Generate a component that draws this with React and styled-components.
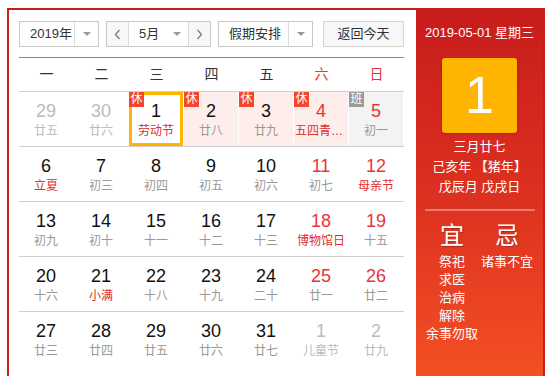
import React from "react";
import styled, { createGlobalStyle } from "styled-components";

const Global = createGlobalStyle`
  html, body { margin: 0; padding: 0; background: #fff; }
  body { font-family: "Liberation Sans", "Noto Sans CJK SC", sans-serif; }
`;

const Frame = styled.div`
  margin: 8px 0 0 7px;
  display: inline-flex;
  border: 2px solid #c81c1c;
  border-left-color: #cc1f1c;
`;

const Main = styled.div`
  width: 407px;
  box-sizing: border-box;
  padding: 11px 12px 10px 10px;
`;

const Toolbar = styled.div`
  display: flex;
  height: 26px;
  padding-bottom: 10px;
  border-bottom: 1px solid #f0604c;
  font-size: 13px;
  color: #333;
`;

const Select = styled.div`
  display: flex;
  box-sizing: border-box;
  height: 26px;
  border: 1px solid #c8c8c8;
  background: #fff;
  margin-right: ${(p) => p.$gap || 0}px;
`;

const SelectText = styled.div`
  width: ${(p) => p.$w}px;
  box-sizing: border-box;
  padding: 0 ${(p) => p.$pr || 0}px 0 10px;
  line-height: 24px;
  display: flex;
  align-items: center;
  justify-content: space-between;
`;

const ArrowBox = styled.div`
  width: ${(p) => p.$w}px;
  box-sizing: border-box;
  border-left: ${(p) => (p.$noDiv ? "none" : "1px solid #dcdcdc")};
  border-right: ${(p) => (p.$divRight ? "1px solid #dcdcdc" : "none")};
  display: flex;
  align-items: center;
  justify-content: center;
  background: ${(p) => (p.$shade ? "#f7f7f7" : "#fff")};
`;

const MonthBox = styled.div`
  width: 61px;
  box-sizing: border-box;
  border-left: 1px solid #dcdcdc;
  border-right: 1px solid #dcdcdc;
  display: flex;
  align-items: center;
  justify-content: space-between;
  padding: 0 7px 0 10px;
  line-height: 24px;
`;

const Tri = styled.span`
  width: 0;
  height: 0;
  border-left: 4px solid transparent;
  border-right: 4px solid transparent;
  border-top: 4px solid #999;
`;

const Button = styled.div`
  width: 81px;
  box-sizing: border-box;
  height: 26px;
  border: 1px solid #d4d4d4;
  background: #f7f7f7;
  text-align: center;
  line-height: 24px;
`;

const WeekHead = styled.div`
  display: grid;
  grid-template-columns: repeat(7, 55px);
  height: 33px;
  border-bottom: 1px solid #cfcfcf;
`;

const WeekDay = styled.div`
  text-align: center;
  line-height: 33px;
  font-size: 14px;
  color: ${(p) => (p.$red ? "#e8333a" : "#333")};
`;

const Row = styled.div`
  display: grid;
  grid-template-columns: repeat(7, 55px);
  border-bottom: ${(p) => (p.$last ? "none" : "1px solid #cfcfcf")};
`;

const cellBg = (p) => {
  if (p.$selected) return "#fff";
  if (p.$mark === "休") return "#fdeeec";
  if (p.$mark === "班") return "#f3f3f3";
  return "#fff";
};

const Cell = styled.div`
  position: relative;
  width: 54px;
  height: 54px;
  box-sizing: border-box;
  padding-top: 9px;
  background: ${cellBg};
  box-shadow: ${(p) => (p.$selected ? "inset 0 0 0 3px #ffb400" : "none")};
  display: flex;
  flex-direction: column;
  align-items: center;
`;

const Num = styled.div`
  font-size: 18px;
  line-height: 20px;
  color: ${(p) => (p.$other ? "#bbb" : p.$red ? "#e8333a" : "#111")};
`;

const Lunar = styled.div`
  margin-top: 2px;
  width: 100%;
  box-sizing: border-box;
  padding: 0 1px;
  font-size: 12px;
  line-height: 16px;
  text-align: center;
  white-space: nowrap;
  overflow: hidden;
  text-overflow: ellipsis;
  color: ${(p) => (p.$other ? "#bbb" : p.$fest ? "#e02d2d" : "#999")};
`;

const Badge = styled.span`
  position: absolute;
  top: 0;
  left: 0;
  width: 15px;
  height: 15px;
  line-height: 15px;
  font-size: 12px;
  text-align: center;
  color: #fff;
  background: ${(p) => (p.$kind === "班" ? "#9a9a9a" : "#f2462f")};
`;

const Side = styled.div`
  width: 127px;
  background: linear-gradient(180deg, #c81c1c 0%, #dc3020 50%, #f44f24 100%);
  color: #fff;
  display: flex;
  flex-direction: column;
  align-items: center;
  padding-top: 14px;
  box-sizing: border-box;
`;

const DateLine = styled.div`
  font-size: 13px;
  line-height: 18px;
  white-space: nowrap;
`;

const BigDay = styled.div`
  margin-top: 16px;
  width: 75px;
  height: 75px;
  border-radius: 3px;
  background: #ffb400;
  box-shadow: 0 1px 3px rgba(120, 0, 0, 0.35);
  font-size: 52px;
  line-height: 75px;
  text-align: center;
`;

const Info = styled.div`
  margin-top: 4px;
  font-size: 13px;
  line-height: 20px;
  text-align: center;
  white-space: nowrap;
`;

const Divider = styled.div`
  margin-top: 12px;
  width: 110px;
  height: 2px;
  background: rgba(255, 255, 255, 0.35);
`;

const Advice = styled.div`
  margin-top: 11px;
  display: grid;
  grid-template-columns: 55px 55px;
`;

const AdviceCol = styled.div`
  display: flex;
  flex-direction: column;
  align-items: center;
`;

const AdviceHead = styled.div`
  font-size: 24px;
  line-height: 28px;
  margin-bottom: 3px;
  text-shadow: 1px 1px 1px rgba(0, 0, 0, 0.25);
`;

const AdviceItem = styled.div`
  font-size: 13px;
  line-height: 18px;
  white-space: nowrap;
`;

const Chevron = ({ dir }) => (
  <svg width="7" height="11" viewBox="0 0 7 11">
    <polyline
      points={dir === "left" ? "5.5,1 1.5,5.5 5.5,10" : "1.5,1 5.5,5.5 1.5,10"}
      fill="none"
      stroke="#777"
      strokeWidth="1.2"
    />
  </svg>
);

const rows = [
  [
    { d: 29, l: "廿五", other: true },
    { d: 30, l: "廿六", other: true },
    { d: 1, l: "劳动节", fest: true, mark: "休", selected: true },
    { d: 2, l: "廿八", mark: "休" },
    { d: 3, l: "廿九", mark: "休" },
    { d: 4, l: "五四青年节", fest: true, mark: "休" },
    { d: 5, l: "初一", mark: "班" },
  ],
  [
    { d: 6, l: "立夏", fest: true },
    { d: 7, l: "初三" },
    { d: 8, l: "初四" },
    { d: 9, l: "初五" },
    { d: 10, l: "初六" },
    { d: 11, l: "初七" },
    { d: 12, l: "母亲节", fest: true },
  ],
  [
    { d: 13, l: "初九" },
    { d: 14, l: "初十" },
    { d: 15, l: "十一" },
    { d: 16, l: "十二" },
    { d: 17, l: "十三" },
    { d: 18, l: "博物馆日", fest: true },
    { d: 19, l: "十五" },
  ],
  [
    { d: 20, l: "十六" },
    { d: 21, l: "小满", fest: true },
    { d: 22, l: "十八" },
    { d: 23, l: "十九" },
    { d: 24, l: "二十" },
    { d: 25, l: "廿一" },
    { d: 26, l: "廿二" },
  ],
  [
    { d: 27, l: "廿三" },
    { d: 28, l: "廿四" },
    { d: 29, l: "廿五" },
    { d: 30, l: "廿六" },
    { d: 31, l: "廿七" },
    { d: 1, l: "儿童节", other: true },
    { d: 2, l: "廿九", other: true },
  ],
];

const weekdays = ["一", "二", "三", "四", "五", "六", "日"];

export default function App() {
  return (
    <>
      <Global />
      <Frame>
        <Main>
          <Toolbar>
            <Select $gap={7}>
              <SelectText $w={54}>2019年</SelectText>
              <ArrowBox $w={24}>
                <Tri />
              </ArrowBox>
            </Select>
            <Select $gap={7}>
              <ArrowBox $w={21} $shade $noDiv>
                <Chevron dir="left" />
              </ArrowBox>
              <MonthBox>
                <span>5月</span>
                <Tri />
              </MonthBox>
              <ArrowBox $w={21} $shade $noDiv>
                <Chevron dir="right" />
              </ArrowBox>
            </Select>
            <Select $gap={10}>
              <SelectText $w={69}>假期安排</SelectText>
              <ArrowBox $w={24}>
                <Tri />
              </ArrowBox>
            </Select>
            <Button>返回今天</Button>
          </Toolbar>
          <WeekHead>
            {weekdays.map((w, i) => (
              <WeekDay key={w} $red={i >= 5}>
                {w}
              </WeekDay>
            ))}
          </WeekHead>
          {rows.map((r, ri) => (
            <Row key={ri} $last={ri === rows.length - 1}>
              {r.map((c, ci) => (
                <Cell key={ci} $mark={c.mark} $selected={c.selected}>
                  {c.mark && <Badge $kind={c.mark}>{c.mark}</Badge>}
                  <Num $other={c.other} $red={ci >= 5}>
                    {c.d}
                  </Num>
                  <Lunar $other={c.other} $fest={c.fest}>
                    {c.l}
                  </Lunar>
                </Cell>
              ))}
            </Row>
          ))}
        </Main>
        <Side>
          <DateLine>2019-05-01 星期三</DateLine>
          <BigDay>1</BigDay>
          <Info>
            三月廿七
            <br />
            己亥年 【猪年】
            <br />
            戊辰月 戊戌日
          </Info>
          <Divider />
          <Advice>
            <AdviceCol>
              <AdviceHead>宜</AdviceHead>
              <AdviceItem>祭祀</AdviceItem>
              <AdviceItem>求医</AdviceItem>
              <AdviceItem>治病</AdviceItem>
              <AdviceItem>解除</AdviceItem>
              <AdviceItem>余事勿取</AdviceItem>
            </AdviceCol>
            <AdviceCol>
              <AdviceHead>忌</AdviceHead>
              <AdviceItem>诸事不宜</AdviceItem>
            </AdviceCol>
          </Advice>
        </Side>
      </Frame>
    </>
  );
}
